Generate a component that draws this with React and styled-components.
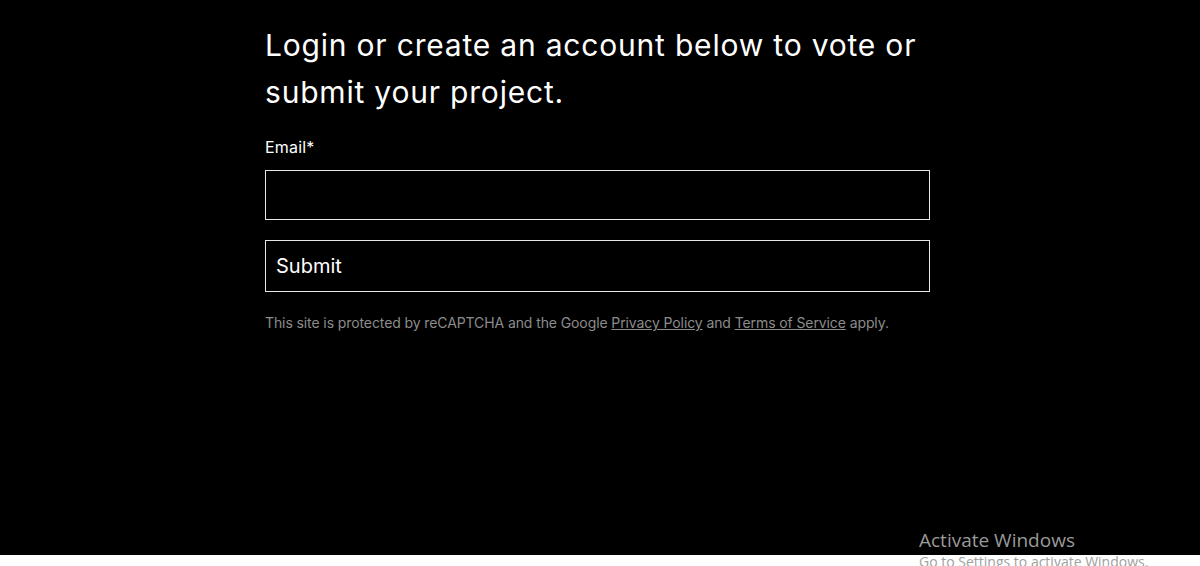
import React from "react";
import styled, { createGlobalStyle } from "styled-components";

const Global = createGlobalStyle`
  html, body { margin: 0; padding: 0; background: #fff; }
  body { font-family: Inter, "Liberation Sans", sans-serif; }
  * { box-sizing: border-box; }
`;

const Screen = styled.div`
  width: 1200px;
  height: 566px;
  display: flex;
  flex-direction: column;
  position: relative;
  overflow: hidden;
`;

const Page = styled.main`
  height: 555px;
  background: #000;
  padding: 22px 0 0 265px;
`;

const Strip = styled.div`
  flex: 1;
  background: #fff;
`;

const Column = styled.div`
  width: 665px;
  display: flex;
  flex-direction: column;
`;

const Heading = styled.h1`
  margin: 0;
  color: #fff;
  font-weight: 400;
  font-size: 30px;
  line-height: 47px;
  letter-spacing: 0.8px;
`;

const Label = styled.label`
  margin-top: 21px;
  color: #fff;
  font-size: 16px;
  line-height: 20px;
  letter-spacing: 0.2px;
`;

const Input = styled.input`
  margin-top: 13px;
  height: 50px;
  width: 100%;
  background: #000;
  border: 1px solid #e6e6e6;
  border-radius: 0;
  outline: none;
  color: #fff;
  font: inherit;
  padding: 0 11px;
`;

const Button = styled.button`
  margin-top: 20px;
  height: 52px;
  width: 100%;
  background: #000;
  border: 1px solid #e6e6e6;
  border-radius: 0;
  color: #fff;
  font-family: inherit;
  font-size: 20px;
  text-align: left;
  padding: 0 10px;
  cursor: pointer;
`;

const Note = styled.p`
  margin: 21px 0 0;
  color: #8c8c8c;
  font-size: 14px;
  line-height: 20px;
  letter-spacing: -0.1px;
  a { color: inherit; text-decoration: underline; }
`;

const Watermark = styled.div`
  position: absolute;
  left: 919px;
  top: 528px;
  font-family: "Open Sans", "Liberation Sans", sans-serif;
  color: #9a9a9a;
  pointer-events: none;
`;

const WmTitle = styled.div`
  font-size: 19px;
  line-height: 25px;
`;

const WmSub = styled.div`
  font-size: 14px;
  line-height: 18px;
  color: #a0a0a0;
`;

export default function App() {
  return (
    <>
      <Global />
      <Screen>
        <Page>
          <Column>
            <Heading>Login or create an account below to vote or submit your project.</Heading>
            <Label htmlFor="email">Email*</Label>
            <Input id="email" type="email" />
            <Button type="button">Submit</Button>
            <Note>
              This site is protected by reCAPTCHA and the Google <a href="#">Privacy Policy</a> and{" "}
              <a href="#">Terms of Service</a> apply.
            </Note>
          </Column>
        </Page>
        <Strip />
        <Watermark>
          <WmTitle>Activate Windows</WmTitle>
          <WmSub>Go to Settings to activate Windows.</WmSub>
        </Watermark>
      </Screen>
    </>
  );
}
